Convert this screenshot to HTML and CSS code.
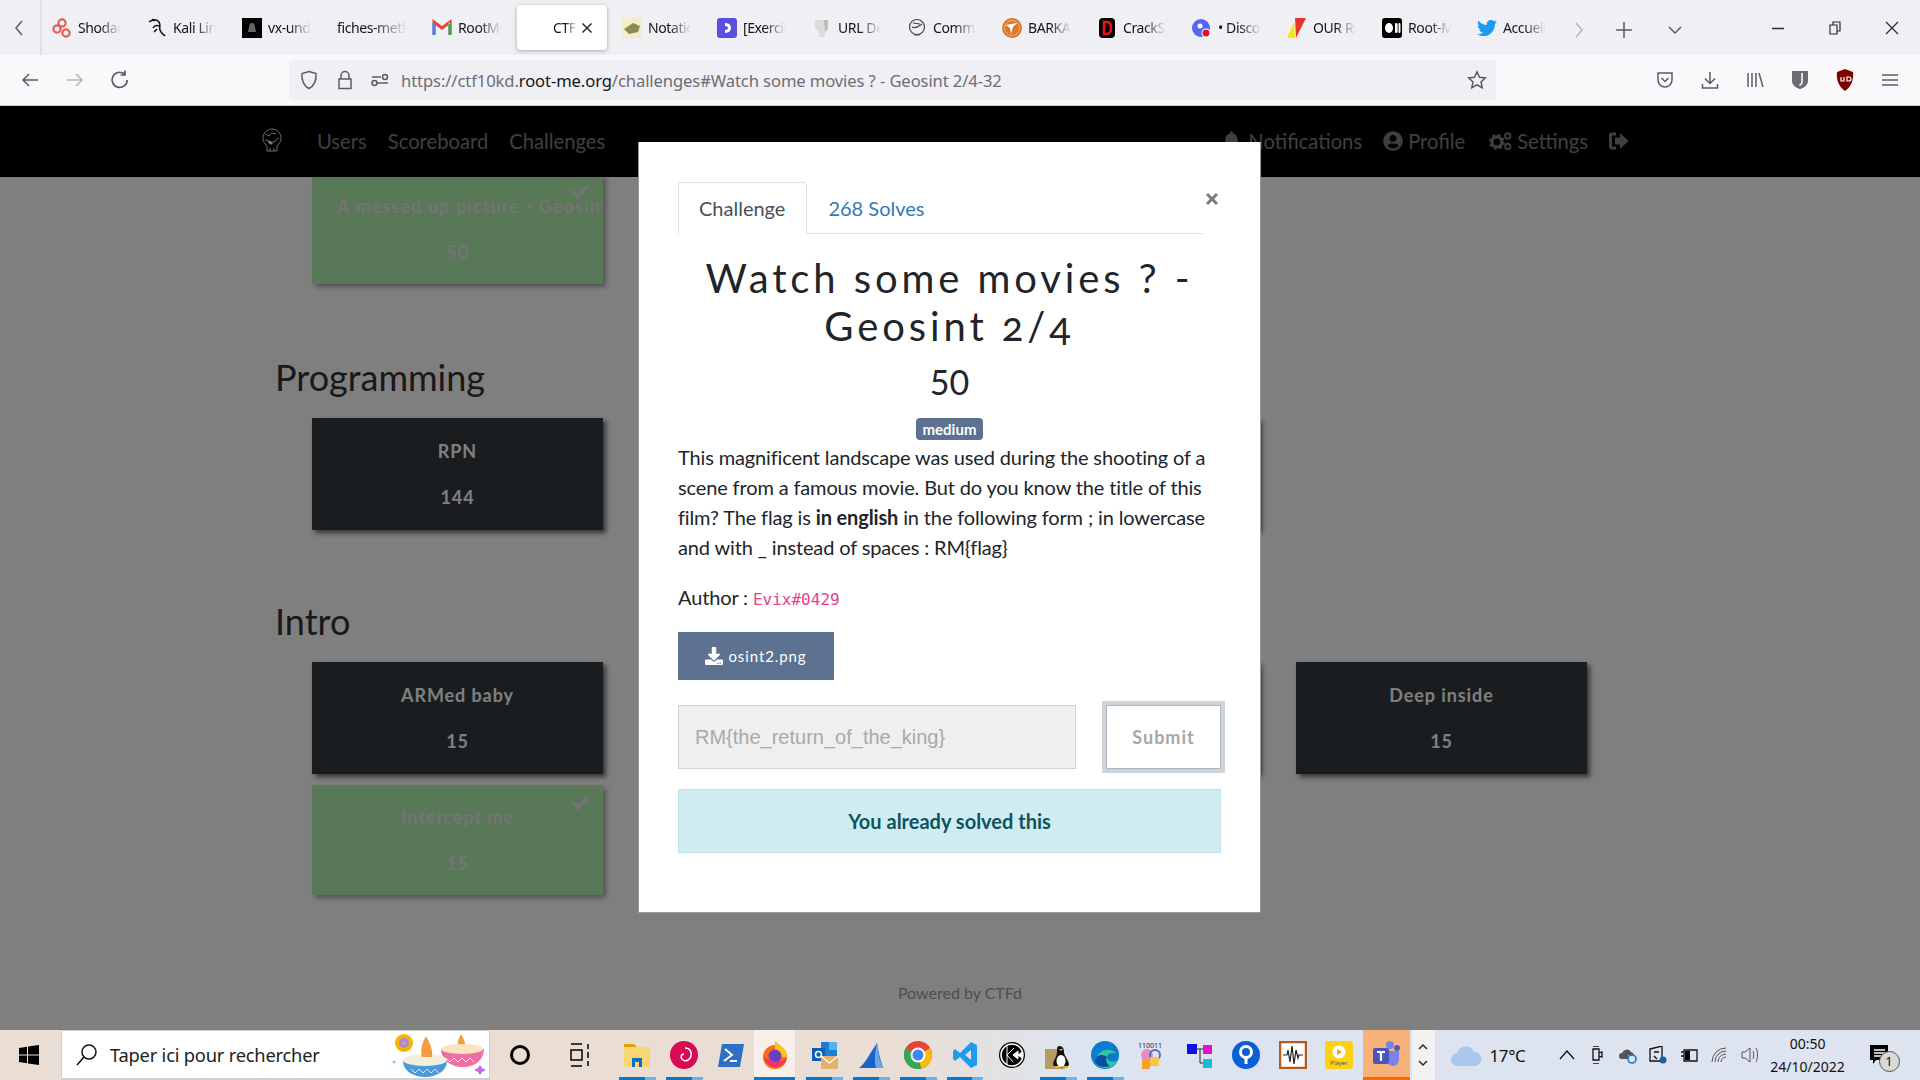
FILE: index.html
```html
<!DOCTYPE html>
<html lang="en">
<head>
    <meta charset="UTF-8">
    <title>CTF</title>
    <link rel="stylesheet" href="styles.css">
</head>
<body>
    <!-- browser tab strip -->
    <div class="tabstrip">
        <div class="tab-scroll"><svg width="12" height="20" viewBox="0 0 12 20"><path d="M9 3L3 10l6 7" class="line"/></svg></div>
        <div class="tab"><svg class="fav" viewBox="0 0 20 20"><circle cx="10" cy="5" r="3.6" class="shodan"/><circle cx="5" cy="11" r="3.6" class="shodan"/><circle cx="14" cy="15" r="3.6" class="shodan"/></svg><span class="tab-label">Shodan</span></div>
        <div class="tab"><svg class="fav" viewBox="0 0 20 20"><path d="M2 4c4-3 8-3 10 0 2 3 0 5 1 8 1 3 3 4 5 6M8 3l-3-2M12 8C9 7 7 8 6 10M10 11l-3 3" class="kali"/></svg><span class="tab-label">Kali Linux</span></div>
        <div class="tab"><svg class="fav" viewBox="0 0 20 20"><rect width="20" height="20" fill="#000"/><path d="M10 5c2 0 3 2 3 4l1 5H6l1-5c0-2 1-4 3-4z" fill="#666"/></svg><span class="tab-label">vx-underground</span></div>
        <div class="tab"><span class="tab-label wide">fiches-methodo</span></div>
        <div class="tab"><svg class="fav" viewBox="0 0 20 20"><path d="M2 17V4l8 6 8-6v13" fill="none" stroke="#ea4335" stroke-width="3"/><path d="M2 17V5" stroke="#4285f4" stroke-width="3"/><path d="M18 17V5" stroke="#34a853" stroke-width="3"/><path d="M16 5l2-1v3z" fill="#fbbc04"/></svg><span class="tab-label">RootMe</span></div>
        <div class="tab active"><span class="tab-label ctf">CTF</span><svg class="tab-close" viewBox="0 0 12 12"><path d="M1.5 1.5l9 9M10.5 1.5l-9 9" class="line dark"/></svg></div>
        <div class="tab"><svg class="fav" viewBox="0 0 20 20"><rect width="20" height="20" fill="#f4eccb"/><path d="M2 11l9-6 7 3-2 6-9 2z" fill="#8c8c52"/></svg><span class="tab-label">Notation</span></div>
        <div class="tab"><svg class="fav" viewBox="0 0 20 20"><rect width="20" height="20" rx="3" fill="#5b4fe0"/><path d="M8 5c5 0 6 3 6 5s-2 5-6 5v-3c2 0 3-1 3-2s-1-2-3-2z" fill="#fff"/></svg><span class="tab-label">[Exercice]</span></div>
        <div class="tab"><svg class="fav" viewBox="0 0 20 20"><path d="M3 2h13v9l-3 3v5H7v-5l-4-3z" fill="#dcdcdc"/><path d="M12 2h4v9l-3 3z" fill="#bcbcbc"/></svg><span class="tab-label">URL Decode</span></div>
        <div class="tab"><svg class="fav" viewBox="0 0 20 20"><circle cx="10" cy="9" r="7.5" class="skull"/><path d="M5 9c4 2 7-1 10-3M6 5l7 1M7 17h6" class="skull"/></svg><span class="tab-label">Comment</span></div>
        <div class="tab"><svg class="fav" viewBox="0 0 20 20"><circle cx="10" cy="10" r="10" fill="#d9782d"/><circle cx="10" cy="10" r="7.5" fill="none" stroke="#f0b27a"/><path d="M4 7l11-2-4 4-2 7-1-6z" fill="#fff"/></svg><span class="tab-label">BARKA</span></div>
        <div class="tab"><svg class="fav" viewBox="0 0 20 20"><rect x="2" width="16" height="20" rx="4" fill="#000"/><path d="M7 4h3c3 0 4 3 4 6s-1 6-4 6H7z" fill="none" stroke="#e11" stroke-width="2.6"/></svg><span class="tab-label">CrackStation</span></div>
        <div class="tab"><svg class="fav" viewBox="0 0 20 20"><circle cx="9" cy="10" r="9" fill="#5865f2"/><circle cx="8" cy="8" r="2.5" fill="#fff"/><circle cx="14" cy="15" r="4.5" fill="#fff"/><circle cx="14" cy="15" r="3.5" fill="#e81123"/></svg><span class="tab-label">• Discord</span></div>
        <div class="tab"><svg class="fav" viewBox="0 0 20 20"><path d="M0 20L7 4l1 16z" fill="#f5e616"/><path d="M8 0h11l-10 20z" fill="#e8352b"/></svg><span class="tab-label">OUR Rules</span></div>
        <div class="tab"><svg class="fav" viewBox="0 0 20 20"><rect width="20" height="20" rx="3" fill="#000"/><ellipse cx="7" cy="10" rx="4" ry="5" fill="#fff"/><rect x="13" y="5" width="2.6" height="10" rx="1.3" fill="#fff"/><rect x="16.5" y="5" width="2" height="10" rx="1" fill="#fff"/></svg><span class="tab-label">Root-Me</span></div>
        <div class="tab"><svg class="fav" viewBox="0 0 512 512"><path fill="#1d9bf0" d="M459.37 151.716c.325 4.548.325 9.097.325 13.645 0 138.72-105.583 298.558-298.558 298.558-59.452 0-114.68-17.219-161.137-47.106 8.447.974 16.568 1.299 25.34 1.299 49.055 0 94.213-16.568 130.274-44.832-46.132-.975-84.792-31.188-98.112-72.772 6.498.974 12.995 1.624 19.818 1.624 9.421 0 18.843-1.3 27.614-3.573-48.081-9.747-84.143-51.98-84.143-102.985v-1.299c13.969 7.797 30.214 12.67 47.431 13.319-28.264-18.843-46.781-51.005-46.781-87.391 0-19.492 5.197-37.36 14.294-52.954 51.655 63.675 129.3 105.258 216.365 109.807-1.624-7.797-2.599-15.918-2.599-24.04 0-57.828 46.782-104.934 104.934-104.934 30.213 0 57.502 12.67 76.67 33.137 23.715-4.548 46.456-13.32 66.599-25.34-7.798 24.366-24.366 44.833-46.132 57.827 21.117-2.273 41.584-8.122 60.426-16.243-14.292 20.791-32.161 39.308-52.628 54.253z"/></svg><span class="tab-label">Accueil</span></div>
        <div class="strip-btn first"><svg width="12" height="20" viewBox="0 0 12 20"><path d="M3 3l6 7-6 7" class="line pale"/></svg></div>
        <div class="strip-btn"><svg width="18" height="18" viewBox="0 0 18 18"><path d="M9 1v16M1 9h16" class="line"/></svg></div>
        <div class="strip-btn last"><svg width="16" height="10" viewBox="0 0 16 10"><path d="M2 2l6 6 6-6" class="line"/></svg></div>
        <div class="win-btns">
            <svg width="12" height="12" viewBox="0 0 12 12"><path d="M0 6.5h12" class="line dark"/></svg>
            <svg width="12" height="14" viewBox="0 0 12 14"><path d="M1 4h7v9H1zM4 4V1h7v9H8" class="line dark thin"/></svg>
            <svg width="14" height="14" viewBox="0 0 14 14"><path d="M1 1l12 12M13 1L1 13" class="line dark thin"/></svg>
        </div>
    </div>

    <!-- address bar -->
    <div class="toolbar">
        <div class="nav-btns">
            <div class="tool-btn"><svg width="18" height="16" viewBox="0 0 18 16"><path d="M17 8H2M8 2L2 8l6 6" class="line"/></svg></div>
            <div class="tool-btn"><svg width="18" height="16" viewBox="0 0 18 16"><path d="M1 8h15M10 2l6 6-6 6" class="line pale"/></svg></div>
            <div class="tool-btn"><svg width="20" height="20" viewBox="0 0 18 18"><path d="M15.5 9A6.8 6.8 0 1 1 13 3.6M13.5 0.5V4.5H9.5" class="line"/></svg></div>
        </div>
        <div class="urlbar">
            <svg class="url-icon" width="18" height="20" viewBox="0 0 18 20"><path d="M9 1.5l7 2c.5 7-1 12-7 15-6-3-7.500-8-7-15z" class="line"/></svg>
            <svg class="url-icon" width="16" height="20" viewBox="0 0 16 20"><path d="M4 9V5.500a4 4 0 0 1 8 0V9M2 9h12v9.500H2z" class="line"/></svg>
            <svg class="url-icon" width="18" height="14" viewBox="0 0 18 14"><path d="M1 4h9M6 10h11" class="line"/><circle cx="14" cy="4" r="2.500" class="line"/><circle cx="3.500" cy="10" r="2.500" class="line"/></svg>
            <span class="url-text">https://ctf10kd.<b>root-me.org</b>/challenges#Watch some movies ? - Geosint 2/4-32</span>
            <svg class="url-star" width="20" height="20" viewBox="0 0 20 20"><path d="M10 1.800l2.500 5.400 5.800.7-4.300 4 1.200 5.800-5.200-2.900-5.200 2.900 1.200-5.800-4.300-4 5.800-.7z" class="line"/></svg>
        </div>
        <div class="tool-right">
            <div class="tool-btn"><svg width="18" height="18" viewBox="0 0 18 18"><path d="M2 2h14v7a7 7 0 0 1-14 0zM5.500 7L9 10.500 12.500 7" class="line"/></svg></div>
            <div class="tool-btn"><svg width="18" height="18" viewBox="0 0 18 18"><path d="M9 1v11M4 7.500l5 5 5-5M1.500 13v4h15v-4" class="line"/></svg></div>
            <div class="tool-btn"><svg width="18" height="18" viewBox="0 0 18 18"><path d="M2 2v14M6 2v14M10 2v14M13 2l4 14" class="line"/></svg></div>
            <div class="tool-btn"><svg width="18" height="20" viewBox="0 0 18 20"><path d="M1 1h16v10c0 4-4 7-8 8-4-1-8-4-8-8z" fill="#6c6c74"/><path d="M11 3v9c0 1.500-1 2.500-2.500 3.500" fill="none" stroke="#f9f9fb" stroke-width="1.600"/></svg></div>
            <div class="tool-btn"><svg width="18" height="22" viewBox="0 0 18 22"><path d="M9 0l8 3c1 8-2 15-8 19C3 18 0 11 1 3z" fill="#800000"/><path d="M5 8v4h3V8M11 8v4h2a2 2 0 0 0 0-4z" fill="none" stroke="#fff" stroke-width="1.200"/></svg></div>
            <div class="tool-btn"><svg width="16" height="14" viewBox="0 0 16 14"><path d="M0 2h16M0 7h16M0 12h16" class="line"/></svg></div>
        </div>
    </div>

    <div class="page">
        <nav class="navbar">
            <svg class="logo" viewBox="0 0 20 26"><path d="M10 1c5 0 9 4 9 9 0 4-2 6-4 8v5H5v-5c-2-2-4-4-4-8 0-5 4-9 9-9z" class="logo-line"/><path d="M3 12c3 0 5 2 7 2 3 0 4-2 7-4M4 6l3 2 3-3 4 1M8 20v3M12 20v3" class="logo-line"/><path d="M6 13c2 0 4 1 5 3-2 1-5 0-5-3z" fill="#fff"/></svg>
            <a class="nav-link first-link">Users</a>
            <a class="nav-link">Scoreboard</a>
            <a class="nav-link">Challenges</a>
            <div class="nav-right">
                <a class="nav-link"><svg class="nav-ico bell" viewBox="0 0 448 512"><path d="M224 512c35.32 0 63.97-28.65 63.97-64H160.03c0 35.35 28.65 64 63.97 64zm215.39-149.71c-19.32-20.76-55.47-51.99-55.47-154.29 0-77.7-54.48-139.9-127.94-155.16V32c0-17.67-14.32-32-31.98-32s-31.98 14.33-31.98 32v20.84C118.56 68.1 64.08 130.3 64.08 208c0 102.3-36.15 133.53-55.47 154.29-6 6.45-8.66 14.16-8.61 21.71.11 16.4 12.98 32 32.1 32h383.8c19.12 0 32-15.6 32.1-32 .05-7.55-2.61-15.27-8.61-21.71z"/></svg>Notifications</a>
                <a class="nav-link"><svg class="nav-ico" viewBox="0 0 496 512"><path d="M248 8C111 8 0 119 0 256s111 248 248 248 248-111 248-248S385 8 248 8zm0 96c48.6 0 88 39.4 88 88s-39.4 88-88 88-88-39.4-88-88 39.4-88 88-88zm0 344c-58.7 0-111.3-26.6-146.5-68.2 18.8-35.4 55.6-59.8 98.5-59.8 2.4 0 4.8.4 7.1 1.1 13 4.2 26.6 6.9 40.9 6.9 14.3 0 28-2.7 40.9-6.9 2.3-.7 4.7-1.1 7.1-1.1 42.9 0 79.7 24.4 98.5 59.800C359.3 421.4 306.7 448 248 448z"/></svg>Profile</a>
                <a class="nav-link"><svg class="nav-ico gears" viewBox="0 0 28 22"><circle cx="10" cy="12" r="5.500" class="gear-big"/><circle cx="10" cy="12" r="7.500" class="gear-teeth"/><circle cx="22" cy="5.500" r="3" class="gear-small"/><circle cx="22" cy="17" r="3" class="gear-small"/></svg>Settings</a>
                <a class="nav-link"><svg class="nav-ico logout" viewBox="0 0 20 18"><path d="M7 2H3a1.500 1.500 0 0 0-1.500 1.500v11A1.500 1.500 0 0 0 3 16h4" fill="none" stroke="#7f7f7f" stroke-width="3"/><path d="M11 1l8.500 8-8.500 8v-4.500H6v-7h5z"/></svg></a>
            </div>
        </nav>

        <main class="board">
            <div class="card-row top-row">
                <div class="card solved clipped"><svg class="tick" viewBox="0 0 512 512"><path d="M173.898 439.404l-166.4-166.4c-9.997-9.997-9.997-26.206 0-36.204l36.203-36.204c9.997-9.998 26.207-9.998 36.204 0L192 312.69 432.095 72.596c9.997-9.997 26.207-9.997 36.204 0l36.203 36.204c9.997 9.997 9.997 26.206 0 36.204l-294.4 294.401c-9.998 9.997-26.207 9.997-36.204-.001z"/></svg><div class="card-title">A messed up picture - Geosint</div><div class="card-value">50</div></div>
            </div>
            <h3 class="cat-title">Programming</h3>
            <div class="card-row">
                <div class="card"><div class="card-title">RPN</div><div class="card-value">144</div></div>
                <div class="card"></div>
                <div class="card"></div>
            </div>
            <h3 class="cat-title">Intro</h3>
            <div class="card-row">
                <div class="card"><div class="card-title">ARMed baby</div><div class="card-value">15</div></div>
                <div class="card"></div>
                <div class="card"></div>
                <div class="card"><div class="card-title">Deep inside</div><div class="card-value">15</div></div>
                <div class="card solved"><svg class="tick" viewBox="0 0 512 512"><path d="M173.898 439.404l-166.4-166.4c-9.997-9.997-9.997-26.206 0-36.204l36.203-36.204c9.997-9.998 26.207-9.998 36.204 0L192 312.69 432.095 72.596c9.997-9.997 26.207-9.997 36.204 0l36.203 36.204c9.997 9.997 9.997 26.206 0 36.204l-294.4 294.401c-9.998 9.997-26.207 9.997-36.204-.001z"/></svg><div class="card-title">Intercept me</div><div class="card-value">15</div></div>
            </div>
        </main>
        <footer class="powered">Powered by CTFd</footer>

        <!-- modal with backdrop -->
        <div class="backdrop">
            <div class="modal">
                <svg class="modal-close" viewBox="0 0 14 14"><path d="M2 2l10 10M12 2L2 12"/></svg>
                <ul class="modal-tabs">
                    <li class="modal-tab current">Challenge</li>
                    <li class="modal-tab">268 Solves</li>
                </ul>
                <h2 class="chal-name">Watch some movies ? - Geosint 2/4</h2>
                <div class="chal-value">50</div>
                <div class="badge-wrap"><span class="badge">medium</span></div>
                <p class="chal-desc">This magnificent landscape was used during the shooting of a scene from a famous movie. But do you know the title of this film? The flag is <strong>in english</strong> in the following form ; in lowercase and with _ instead of spaces : RM{flag}</p>
                <p class="chal-author">Author : <code>Evix#0429</code></p>
                <a class="file-btn"><svg class="file-ico" viewBox="0 0 512 512"><path d="M216 0h80c13.3 0 24 10.7 24 24v168h87.7c17.8 0 26.7 21.5 14.1 34.1L269.7 378.3c-7.5 7.5-19.8 7.5-27.3 0L90.1 226.1c-12.6-12.6-3.7-34.1 14.1-34.1H192V24c0-13.3 10.7-24 24-24zm296 376v112c0 13.3-10.7 24-24 24H24c-13.3 0-24-10.7-24-24V376c0-13.3 10.7-24 24-24h146.7l49 49c20.1 20.1 52.5 20.1 72.6 0l49-49H488c13.3 0 24 10.7 24 24zm-124 88c0-11-9-20-20-20s-20 9-20 20 9 20 20 20 20-9 20-20zm64 0c0-11-9-20-20-20s-20 9-20 20 9 20 20 20 20-9 20-20z"/></svg>osint2.png</a>
                <div class="submit-row">
                    <input class="flag-input" type="text" value="RM{the_return_of_the_king}" readonly>
                    <button class="submit-btn">Submit</button>
                </div>
                <div class="solved-alert">You already solved this</div>
            </div>
        </div>
    </div>

    <!-- windows taskbar -->
    <div class="taskbar">
        <div class="start"><svg width="20" height="20" viewBox="0 0 20 20"><path d="M0 3l8-1.200V9.500H0zM9 1.600L20 0v9.500H9zM0 10.500h8v7.700L0 17zM9 10.500h11V20L9 18.400z" fill="#000"/></svg></div>
        <div class="searchbox">
            <svg class="search-ico" width="22" height="24" viewBox="0 0 22 24"><circle cx="13" cy="9" r="7" fill="none" stroke="#111" stroke-width="1.500"/><path d="M8 14l-7 8" stroke="#111" stroke-width="1.500"/></svg>
            <span class="search-text">Taper ici pour rechercher</span>
            <svg class="candles" width="96" height="48" viewBox="0 0 96 48">
                <circle cx="13" cy="12" r="9" fill="#f5b400"/><circle cx="13" cy="12" r="5" fill="#a78bd8"/><circle cx="13" cy="12" r="2" fill="#f08ab0"/>
                <path d="M70 3c3 5 5 10 4 15h-7c-1-5 0-10 3-15z" fill="#f49b3f"/>
                <path d="M50 18h43c0 10-8 18-21 18S50 28 50 18z" fill="#ee6ea5"/>
                <ellipse cx="71" cy="18" rx="21" ry="5" fill="#fbe3c0"/>
                <path d="M55 27l4 4 4-4 4 4 4-4 4 4 4-4 4 4" fill="none" stroke="#fbd3e3"/>
                <path d="M12 30h44c0 9-9 16-22 16S12 39 12 30z" fill="#4a9bdc"/>
                <ellipse cx="34" cy="29" rx="22" ry="6" fill="#f2efdc"/>
                <path d="M35 5c4 7 7 14 6 21h-10c-2-7 0-14 4-21z" fill="#f49b3f"/>
                <path d="M20 38l4 4 4-4 4 4 4-4 4 4 4-4 4 4" fill="none" stroke="#cfe6f7"/>
                <path d="M89 34l2 3 4 2-4 2-2 3-2-3-4-2 4-2z" fill="#c86ae8"/>
                <circle cx="3" cy="31" r="1.500" fill="#6fd3e8"/>
            </svg>
        </div>
        <div class="sys-btn"><svg width="24" height="24" viewBox="0 0 24 24"><circle cx="12" cy="12" r="8.500" fill="none" stroke="#000" stroke-width="3"/></svg></div>
        <div class="sys-btn"><svg width="22" height="24" viewBox="0 0 22 24"><path d="M2 1h11M2 23h11M2 7h11v10H2zM19 1v5M19 9v6M19 18v5" fill="none" stroke="#000" stroke-width="1.500"/></svg></div>

        <div class="app run"><svg class="app-ico" viewBox="0 0 28 28"><path d="M1 3h10l3 3H1z" fill="#e0a100"/><path d="M1 6h26v20H1z" fill="#f8d775"/><path d="M9 26v-9h10v9h-3v-5h-4v5z" fill="#0a6cc4"/></svg></div>
        <div class="app run"><svg class="app-ico" viewBox="0 0 28 28"><circle cx="14" cy="14" r="14" fill="#d70a53"/><path d="M15 7c5 0 7 4 6 8s-5 6-8 4-2-6 1-6" fill="none" stroke="#fff" stroke-width="1.500"/></svg></div>
        <div class="app"><svg class="app-ico" viewBox="0 0 28 28"><path d="M5 3h22l-4 23H1z" fill="#2c6fc4"/><path d="M8 8l7 6-8 6M13 20h7" fill="none" stroke="#fff" stroke-width="2"/></svg></div>
        <div class="app run hot"><svg class="app-ico" viewBox="0 0 28 28"><circle cx="14" cy="16" r="12" fill="#ff6a1a"/><path d="M14 0c6 5 12 8 12 16H14z" fill="#ffc21a"/><circle cx="14" cy="15" r="6.500" fill="#6b3fc4"/><path d="M2 16c2 4 6 10 12 10s10-4 12-9c-5 5-14 5-24-1z" fill="#f0306f"/></svg></div>
        <div class="app run"><svg class="app-ico" viewBox="0 0 28 28"><path d="M10 1h16v16H10z" fill="#1c7ed6"/><path d="M18 1h8v8h-8z" fill="#50b4f0"/><rect x="1" y="7" width="13" height="13" fill="#0a5fb0"/><circle cx="7.500" cy="13.500" r="3" fill="none" stroke="#fff" stroke-width="1.600"/><path d="M10 15h17v13H10z" fill="#e3b06f"/><path d="M10 15l8.500 7 8.500-7" fill="none" stroke="#fff" stroke-width="1.200"/></svg></div>
        <div class="app run"><svg class="app-ico" viewBox="0 0 28 28"><path d="M2 27C7 24 12 14 20 2c1 7 3 16 6 25z" fill="#1c62c8"/><path d="M20 2c1 8 2 17 6 25h-7c-2-8-1-17 1-25z" fill="#6ba7e8"/></svg></div>
        <div class="app run"><svg class="app-ico" viewBox="0 0 28 28"><circle cx="14" cy="14" r="14" fill="#ea4335"/><path d="M14 14L26 7a14 14 0 0 1-9 20.700z" fill="#fbbc04"/><path d="M14 14l3 13.700A14 14 0 0 1 2 7z" fill="#34a853"/><circle cx="14" cy="14" r="6.500" fill="#4285f4" stroke="#fff" stroke-width="2"/></svg></div>
        <div class="app run"><svg class="app-ico" viewBox="0 0 28 28"><path d="M20 1l6 3v20l-6 3-11-11-5 4-2-2v-8l2-2 5 4zm0 8l-6 5 6 5z" fill="#1f9cf0"/></svg></div>
        <div class="app"><svg class="app-ico" viewBox="0 0 28 28"><circle cx="14" cy="14" r="13" fill="#000"/><circle cx="14" cy="14" r="11" fill="none" stroke="#fff" stroke-width="1.500"/><path d="M9 5v18M9 14l7-7M9 14l6 7M15 14l5-4v8zM20 14l4-3v6z" fill="#fff" stroke="#fff"/></svg></div>
        <div class="app run"><svg class="app-ico" viewBox="0 0 28 28"><path d="M0 8h18l2 20H0z" fill="#b99a62"/><path d="M14 5c4 0 5 3 5 6 0 4 5 8 5 13-2 3-14 3-16 0 0-5 4-8 4-13 0-3 0-6 2-6z" fill="#111"/><ellipse cx="16" cy="20" rx="4.500" ry="6" fill="#fff"/><path d="M10 25h5v2h-5zM18 25h5v2h-5zM14 8l4 0-2 2z" fill="#f5b400"/></svg></div>
        <div class="app run"><svg class="app-ico" viewBox="0 0 28 28"><circle cx="14" cy="14" r="14" fill="#0c7ccd"/><path d="M4 21c2-12 14-16 22-8-3-2-10-1-10 3 0 5 7 6 11 3-3 7-12 10-18 7-2-1-4-3-5-5z" fill="#33c6a0"/><path d="M4 21c0-7 7-9 12-5-2 3 0 7 3 9-6 2-12 1-15-4z" fill="#0a4ea0"/></svg></div>
        <div class="app"><svg class="app-ico" viewBox="0 0 28 28"><text x="0" y="7" class="bin-text">110011</text><circle cx="9" cy="14" r="6" fill="#e88cc0"/><circle cx="17" cy="14" r="5" fill="none" stroke="#5566cc" stroke-width="2"/><rect x="4" y="18" width="8" height="10" fill="#f7a02c"/><rect x="12" y="16" width="9" height="9" fill="#f5c842"/></svg></div>
        <div class="app"><svg class="app-ico" viewBox="0 0 28 28"><rect x="2" y="3" width="10" height="10" fill="#1010e0"/><rect x="18" y="4" width="9" height="9" fill="#e010d0"/><rect x="18" y="18" width="9" height="9" fill="#10c0d0"/><path d="M12 8h6M15 8v14h3" fill="none" stroke="#222"/></svg></div>
        <div class="app"><svg class="app-ico" viewBox="0 0 28 28"><circle cx="14" cy="14" r="14" fill="#0a5fd6"/><circle cx="14" cy="11" r="5.500" fill="none" stroke="#fff" stroke-width="3"/><path d="M14 16v7" stroke="#fff" stroke-width="3"/></svg></div>
        <div class="app"><svg class="app-ico" viewBox="0 0 28 28"><rect x="1" y="1" width="26" height="26" fill="#fff" stroke="#b85a1e" stroke-width="2.500"/><path d="M4 14h4l1-5 2 12 2-16 2 18 2-14 2 8 1-3h4" fill="none" stroke="#222" stroke-width="1.200"/></svg></div>
        <div class="app"><svg class="app-ico" viewBox="0 0 28 28"><rect width="28" height="28" rx="3" fill="#fcd116"/><circle cx="14" cy="11" r="6.500" fill="#fff"/><path d="M12 8l5 3-5 3z" fill="#f0a000"/><text x="14" y="24" class="player-text">Player</text></svg></div>
        <div class="app teams"><svg class="app-ico" viewBox="0 0 28 28"><circle cx="18" cy="5" r="4" fill="#7b83eb"/><circle cx="25" cy="8" r="3" fill="#5059c9"/><path d="M14 11h13v9a6 6 0 0 1-12 0z" fill="#7b83eb"/><rect x="1" y="8" width="16" height="16" rx="2" fill="#4b53bc"/><path d="M5 12h8M9 12v9" stroke="#fff" stroke-width="2.200"/></svg></div>

        <div class="tray-scroll">
            <svg width="10" height="7" viewBox="0 0 10 7"><path d="M1 6l4-4 4 4" class="line dark"/></svg>
            <svg width="10" height="7" viewBox="0 0 10 7"><path d="M1 1l4 4 4-4" class="line dark"/></svg>
        </div>
        <div class="weather">
            <svg width="32" height="24" viewBox="0 0 32 24"><path d="M8 23a6.500 6.500 0 0 1-1-13 9 9 0 0 1 17-1 7 7 0 0 1 1 14z" fill="#a9c8ec"/></svg>
            <span>17°C</span>
        </div>
        <div class="tray">
            <svg class="tray-ico" viewBox="0 0 18 18"><path d="M2 13l7-8 7 8" class="tray-line"/></svg>
            <svg class="tray-ico" viewBox="0 0 18 18"><path d="M5 0h6M5 18h6M5 3h6v11H5zM11 7l3-1v5l-3-1" class="tray-line"/></svg>
            <svg class="tray-ico" viewBox="0 0 18 18"><path d="M3 13a3 3 0 0 1 0-6 5 5 0 0 1 9-1 4 4 0 0 1 3 3H9v4z" fill="#555"/><circle cx="13" cy="13" r="4" fill="none" stroke="#0a78d4" stroke-width="1.600"/></svg>
            <svg class="tray-ico" viewBox="0 0 18 18"><path d="M1 3l12-3v15H1zM5 6l5 0M5 10l3 3" class="tray-line"/><circle cx="14" cy="14" r="3.500" fill="#1c5fa8"/></svg>
            <svg class="tray-ico" viewBox="0 0 18 18"><path d="M4 4h13v11H4zM1 6h3M1 10h3" class="tray-line"/><rect x="5" y="5" width="5" height="9" fill="#000"/></svg>
            <svg class="tray-ico" viewBox="0 0 18 18"><path d="M2 16a14 14 0 0 1 14-14M5 16A11 11 0 0 1 16 5M8 16a8 8 0 0 1 8-8M11 16a5 5 0 0 1 5-5" class="tray-line thin"/></svg>
            <svg class="tray-ico" viewBox="0 0 18 18"><path d="M1 6h3l5-4v14l-5-4H1zM12 5c1 2 1 6 0 8M15 2c2 4 2 10 0 14" class="tray-line thin"/></svg>
        </div>
        <div class="clock"><div>00:50</div><div>24/10/2022</div></div>
        <div class="notif">
            <svg width="22" height="24" viewBox="0 0 22 24"><path d="M1 1h18v15h-12l-3 4v-4H1z" fill="#000"/><path d="M5 6h11M5 9h11M5 12h7" stroke="#fff" stroke-width="1.400"/></svg>
            <span class="notif-count">1</span>
        </div>
    </div>
</body>
</html>
```

FILE: styles.css
```css
* {
    box-sizing: border-box;
}
body {
    margin: 0;
    height: 1080px;
    width: 1920px;
    overflow: hidden;
    display: flex;
    flex-direction: column;
    font-family: "Lato", "Noto Sans", sans-serif;
    background: #fff;
}
svg {
    display: block;
    flex-shrink: 0;
}
.line {
    fill: none;
    stroke: #5b5b66;
    stroke-width: 1.5;
}
.line.pale {
    stroke: #b4b4bb;
}
.line.dark {
    stroke: #2a2a2e;
}
.line.thin {
    stroke-width: 1.2;
}

/* tab strip */
.tabstrip {
    height: 55px;
    display: flex;
    background: #f0f0f4;
    padding-top: 5px;
    position: relative;
}
.tab-scroll {
    width: 42px;
    margin-top: -5px;
    height: 55px;
    display: flex;
    align-items: center;
    justify-content: center;
    padding-right: 2px;
    border-right: 2px solid #e0e0e6;
}
.tab {
    width: 95px;
    height: 45px;
    display: flex;
    align-items: center;
    gap: 6px;
    padding-left: 10px;
    font-family: "Noto Sans", sans-serif;
    font-size: 14px;
    letter-spacing: -0.4px;
    color: #15141a;
}
.fav {
    width: 20px;
    height: 20px;
}
.tab-label {
    width: 43px;
    white-space: nowrap;
    overflow: hidden;
    -webkit-mask-image: linear-gradient(to right, #000 50%, transparent);
    mask-image: linear-gradient(to right, #000 50%, transparent);
}
.tab-label.wide {
    width: 70px;
}
.tab.active {
    width: 90px;
    margin-right: 5px;
    background: #fff;
    border-radius: 4px;
    box-shadow: 0 1px 4px rgba(0, 0, 0, 0.3);
    padding-left: 36px;
    gap: 4px;
}
.tab-label.ctf {
    width: 24px;
}
.tab-close {
    width: 12px;
    height: 12px;
}
.shodan {
    fill: none;
    stroke: #e0605a;
    stroke-width: 2.2;
}
.kali {
    fill: none;
    stroke: #111;
    stroke-width: 1.5;
}
.skull {
    fill: none;
    stroke: #444;
    stroke-width: 1.2;
}
.strip-btn {
    width: 45px;
    height: 50px;
    display: flex;
    align-items: center;
    justify-content: center;
}
.strip-btn.first {
    margin-left: -6px;
}
.strip-btn.last {
    margin-left: 6px;
}
.win-btns {
    position: absolute;
    right: 0;
    top: 0;
    height: 55px;
    width: 171px;
    display: flex;
    align-items: center;
    justify-content: space-between;
    padding: 0 21px 0 23px;
}

/* address bar */
.toolbar {
    height: 51px;
    display: flex;
    align-items: flex-start;
    background: #f9f9fb;
    border-bottom: 1px solid #c8c8cc;
    padding: 5px 8px 0 7px;
}
.nav-btns,
.tool-right {
    display: flex;
}
.tool-btn {
    width: 45px;
    height: 40px;
    display: flex;
    align-items: center;
    justify-content: center;
}
.urlbar {
    width: 1207px;
    height: 40px;
    margin-left: 147px;
    background: #f0f0f4;
    border-radius: 4px;
    display: flex;
    align-items: center;
    position: relative;
    padding-left: 11px;
}
.url-icon {
    margin-right: 19px;
}
.url-icon:nth-child(2) {
    margin-right: 18px;
}
.url-icon:nth-child(3) {
    margin-right: 12px;
}
.url-text {
    font-family: "Noto Sans", sans-serif;
    font-size: 16.6px;
    letter-spacing: -0.1px;
    color: #6d6d75;
    white-space: nowrap;
}
.url-text b {
    font-weight: 400;
    color: #15141a;
}
.url-star {
    margin-left: auto;
    margin-right: 9px;
}
.tool-right {
    margin-left: auto;
}

/* challenge page */
.page {
    flex: 1;
    position: relative;
    overflow: hidden;
    background: #fff;
    min-height: 0;
}
.navbar {
    height: 71px;
    background: #000;
    display: flex;
    align-items: center;
    padding: 0 0 2px 262px;
    position: relative;
    z-index: 1;
}
.logo {
    width: 20px;
    height: 26px;
    margin-right: 35px;
}
.logo-line {
    fill: none;
    stroke: #e0e0e0;
    stroke-width: 1;
}
.nav-link {
    display: flex;
    align-items: center;
    font-size: 20.2px;
    color: rgba(255, 255, 255, 0.5);
    margin-right: 21px;
}
.nav-right {
    margin-left: auto;
    margin-right: 270px;
    display: flex;
}
.nav-ico {
    width: 20px;
    height: 20px;
    fill: #7f7f7f;
    margin-right: 5px;
}
.nav-ico.bell {
    margin-right: 8px;
    width: 17px;
}
.nav-ico.gears {
    width: 29px;
    margin-right: 2px;
}
.nav-ico.logout {
    margin: 0;
}
.gear-big {
    fill: none;
    stroke: #7f7f7f;
    stroke-width: 3.5;
}
.gear-teeth {
    fill: none;
    stroke: #7f7f7f;
    stroke-width: 2.4;
    stroke-dasharray: 3 3;
}
.gear-small {
    fill: none;
    stroke: #7f7f7f;
    stroke-width: 2;
}

.board {
    padding-left: 276px;
}
.card-row {
    display: grid;
    grid-template-columns: repeat(4, 291px);
    column-gap: 37px;
    row-gap: 11px;
    padding-left: 36px;
}
.top-row {
    height: 179px;
    overflow: hidden;
    align-content: start;
}
.card {
    position: relative;
    height: 112px;
    background: #343a40;
    box-shadow: 3px 3px 5px rgba(0, 0, 0, 0.6);
    text-align: center;
    color: #fff;
    font-weight: 700;
    font-size: 18px;
    letter-spacing: 0.9px;
    padding-top: 21px;
    overflow: hidden;
}
.card.solved {
    height: 110px;
    background: #b0f0b0;
    color: #e8e8e8;
    padding-top: 20px;
    box-shadow: 3px 3px 5px rgba(0, 0, 0, 0.35);
}
.card.clipped {
    margin-top: -3px;
    letter-spacing: 1.1px;
}
.card-title {
    line-height: 24px;
    height: 24px;
    white-space: nowrap;
}
.clipped .card-title {
    text-align: left;
    padding-left: 25px;
}
.card-value {
    margin-top: 22px;
    line-height: 24px;
}
.tick {
    position: absolute;
    top: 9px;
    right: 14px;
    width: 18px;
    height: 18px;
    fill: #e8e8e8;
}
.cat-title {
    margin: 0 0 0 -1px;
    font-weight: 400;
    font-size: 36px;
    line-height: 42px;
    color: #333;
}
.card-row + .cat-title {
    margin-top: 70px;
}
.top-row + .cat-title {
    margin-top: 0;
}
.cat-title + .card-row {
    margin-top: 20px;
}
.powered {
    text-align: center;
    font-size: 16px;
    color: #9c9c9c;
    position: absolute;
    left: 0;
    right: 0;
    top: 877px;
    line-height: 20px;
}

/* modal */
.backdrop {
    position: absolute;
    inset: 0;
    z-index: 2;
    background: rgba(0, 0, 0, 0.5);
    padding: 36px 0 0 638px;
}
.modal {
    position: relative;
    width: 623px;
    height: 771px;
    background: #fff;
    border: 1px solid rgba(0, 0, 0, 0.4);
    border-top: 0;
    padding: 40px 39px 0;
    color: #212529;
}
.modal-close {
    position: absolute;
    top: 50px;
    right: 41px;
    width: 14px;
    height: 14px;
    stroke: #7a7a7a;
    stroke-width: 3;
    fill: none;
}
.modal-tabs {
    list-style: none;
    margin: 0 18px 0 0;
    padding: 0;
    display: flex;
    height: 52px;
    border-bottom: 1px solid #dee2e6;
    font-size: 20px;
}
.modal-tab {
    padding: 0 20px 0 21px;
    line-height: 52px;
    color: #337ab7;
    height: 52px;
}
.modal-tab.current {
    color: #495057;
    background: #fff;
    border: 1px solid #dee2e6;
    border-bottom-color: #fff;
    border-radius: 4px 4px 0 0;
    padding: 0 21px 0 20px;
    line-height: 50px;
}
.chal-name {
    margin: 20px 0 0;
    font-weight: 400;
    font-size: 40px;
    line-height: 48px;
    letter-spacing: 3.9px;
    text-align: center;
    font-feature-settings: "onum";
}
.chal-value {
    margin-top: 8px;
    font-size: 34px;
    line-height: 48px;
    text-align: center;
}
.badge-wrap {
    display: flex;
    justify-content: center;
    margin-top: 12px;
}
.badge {
    width: 67px;
    height: 22px;
    border-radius: 4px;
    background: #5c7290;
    color: #fff;
    font-size: 15px;
    font-weight: 700;
    line-height: 22px;
    text-align: center;
}
.chal-desc {
    margin: 2px 0 0;
    font-size: 20px;
    letter-spacing: -0.14px;
    line-height: 30px;
    width: 543px;
}
.chal-author {
    margin: 20px 0 0;
    font-size: 20px;
    letter-spacing: -0.14px;
    line-height: 30px;
}
.chal-author code {
    font-family: "DejaVu Sans Mono", monospace;
    font-size: 16px;
    letter-spacing: 0;
    color: #e83e8c;
}
.file-btn {
    display: flex;
    align-items: center;
    justify-content: center;
    width: 156px;
    height: 48px;
    margin-top: 17px;
    background: #5c7290;
    color: #fff;
    font-size: 15px;
    letter-spacing: 0.9px;
}
.file-ico {
    width: 18px;
    height: 18px;
    fill: #fff;
    margin-right: 5px;
}
.submit-row {
    display: flex;
    margin-top: 25px;
}
.flag-input {
    width: 398px;
    height: 64px;
    border: 1px solid #ced4da;
    background: #efefef;
    padding: 0 16px;
    font-family: "Liberation Sans", Arial, sans-serif;
    font-size: 20px;
    color: #a9a9a9;
    outline: none;
}
.submit-btn {
    width: 115px;
    height: 64px;
    margin-left: 30px;
    background: #fff;
    border: 1px solid #adb5bd;
    box-shadow: 0 0 0 4px #ced4da;
    font-family: "Lato", sans-serif;
    font-weight: 700;
    font-size: 18px;
    letter-spacing: 1px;
    color: #a3a8ad;
}
.solved-alert {
    margin-top: 20px;
    width: 543px;
    height: 64px;
    background: #d1ecf1;
    border: 1px solid #bee5eb;
    color: #0c5460;
    font-size: 20px;
    font-weight: 700;
    line-height: 62px;
    text-align: center;
}

/* taskbar */
.taskbar {
    height: 50px;
    display: flex;
    align-items: stretch;
    background: linear-gradient(to right, #eaded4 0%, #eaded4 46%, #dde4ef 56%, #dde4ef 100%);
    font-family: "Noto Sans", sans-serif;
    color: #111;
}
.start {
    width: 61px;
    display: flex;
    align-items: center;
    justify-content: center;
    padding-right: 3px;
}
.searchbox {
    width: 429px;
    background: #fff;
    border: 1px solid #cfcfcf;
    border-bottom-width: 2px;
    display: flex;
    align-items: center;
    position: relative;
    padding-left: 14px;
}
.search-ico {
    margin-right: 12px;
}
.search-text {
    font-size: 18.3px;
    letter-spacing: -0.2px;
    color: #222;
}
.candles {
    margin-left: auto;
    margin-right: 2px;
}
.sys-btn {
    width: 60px;
    display: flex;
    align-items: center;
    justify-content: center;
}
.sys-btn + .app {
    margin-left: 4px;
}
.app {
    width: 46.8px;
    position: relative;
    display: flex;
    align-items: center;
    justify-content: center;
}
.app-ico {
    width: 28px;
    height: 28px;
}
.app.run::after {
    content: "";
    position: absolute;
    left: 5px;
    right: 5px;
    bottom: 0;
    height: 3px;
    background: linear-gradient(to right, #0078d4 70%, #6fb2e8 70%);
}
.app.hot {
    width: 41px;
    margin-right: 5.8px;
    background: #f7efe8;
}
.app.hot::after {
    left: 0;
    right: 0;
    background: #0078d4;
}
.app.teams {
    background: #f7b27a;
    border-bottom: 3px solid #f76b00;
}
.bin-text {
    font-family: "Noto Sans", sans-serif;
    font-size: 7px;
    fill: #226;
}
.player-text {
    font-family: "Noto Sans", sans-serif;
    font-size: 6px;
    text-anchor: middle;
    fill: #555;
}
.tray-scroll {
    width: 23px;
    margin-left: 2px;
    background: #f2f2f2;
    display: flex;
    flex-direction: column;
    align-items: center;
    justify-content: space-around;
    padding: 8px 0;
}
.weather {
    display: flex;
    align-items: center;
    gap: 8px;
    margin-left: 15px;
    font-size: 17px;
    letter-spacing: -0.4px;
    width: 108px;
}
.tray {
    display: flex;
    align-items: center;
    gap: 12.500px;
}
.tray-ico {
    width: 18px;
    height: 18px;
}
.tray-line {
    fill: none;
    stroke: #111;
    stroke-width: 1.3;
}
.tray-line.thin {
    stroke: #555;
    stroke-width: 1;
}
.clock {
    width: 90px;
    margin-left: 4px;
    display: flex;
    flex-direction: column;
    align-items: center;
    justify-content: center;
    font-size: 14px;
    line-height: 23px;
}
.notif {
    position: relative;
    margin-left: 16px;
    padding-top: 14px;
}
.notif-count {
    position: absolute;
    left: 10px;
    top: 21px;
    width: 21px;
    height: 21px;
    border-radius: 50%;
    background: #d9d9d9;
    border: 1px solid #555;
    font-size: 13px;
    line-height: 19px;
    text-align: center;
}
```
